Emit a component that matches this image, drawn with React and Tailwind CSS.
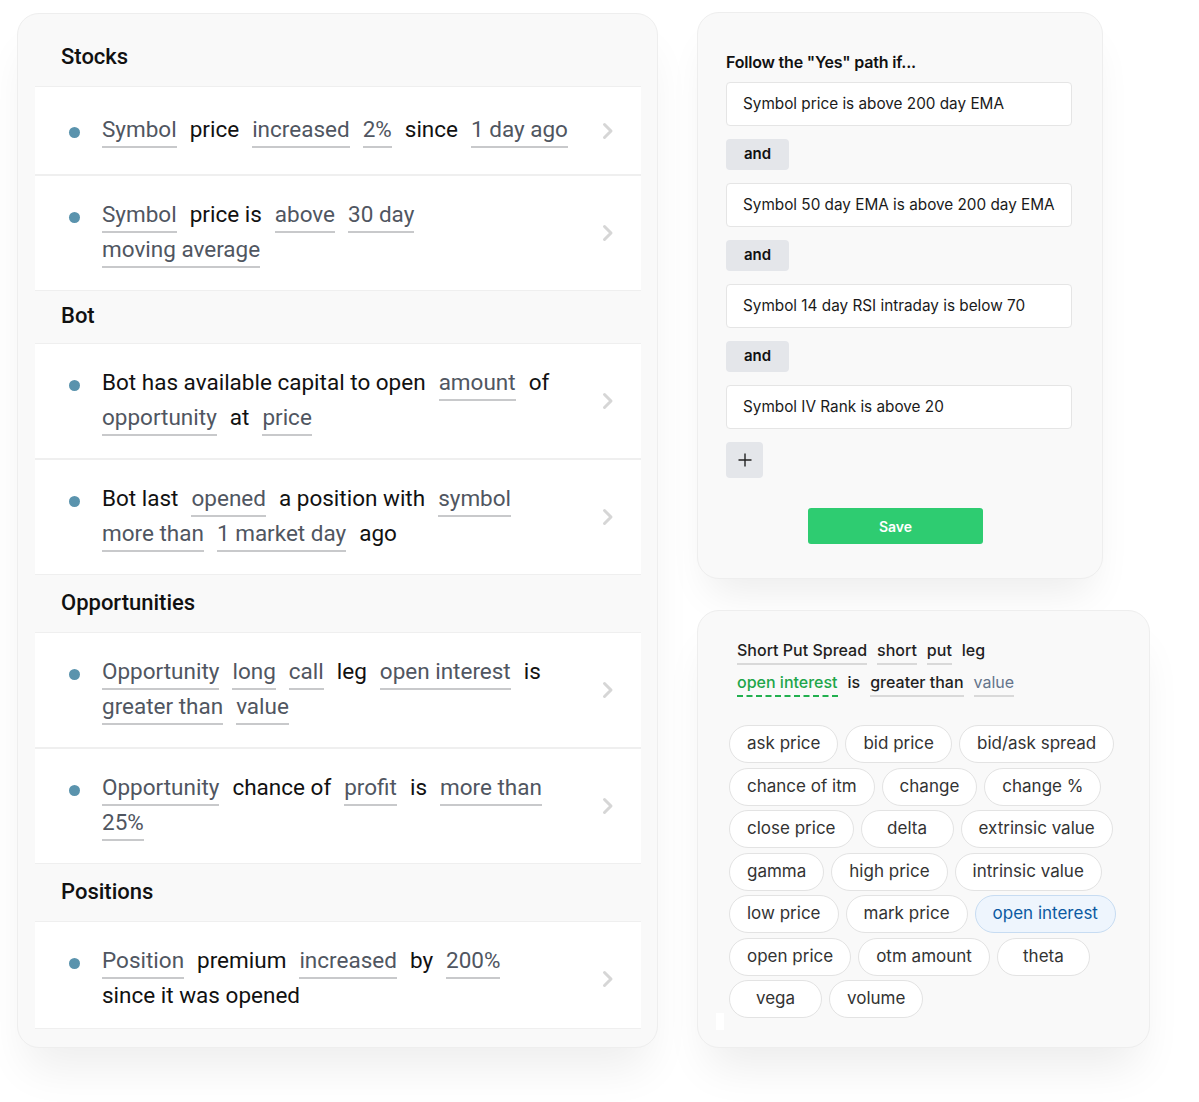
import React from 'react';

const sections = [
  {
    title: 'Stocks',
    head: 'h-[57px]',
    items: [
      [[['Symbol', 1], ['price'], ['increased', 1], ['2%', 1], ['since'], ['1 day ago', 1]]],
      [
        [['Symbol', 1], ['price is'], ['above', 1], ['30 day', 1]],
        [['moving average', 1]],
      ],
    ],
  },
  {
    title: 'Bot',
    head: 'h-[52px]',
    items: [
      [
        [['Bot has available capital to open'], ['amount', 1], ['of']],
        [['opportunity', 1], ['at'], ['price', 1]],
      ],
      [
        [['Bot last'], ['opened', 1], ['a position with'], ['symbol', 1]],
        [['more than', 1], ['1 market day', 1], ['ago']],
      ],
    ],
  },
  {
    title: 'Opportunities',
    head: 'h-[57px]',
    items: [
      [
        [['Opportunity', 1], ['long', 1], ['call', 1], ['leg'], ['open interest', 1], ['is']],
        [['greater than', 1], ['value', 1]],
      ],
      [
        [['Opportunity', 1], ['chance of'], ['profit', 1], ['is'], ['more than', 1]],
        [['25%', 1]],
      ],
    ],
  },
  {
    title: 'Positions',
    head: 'h-[57px]',
    items: [
      [
        [['Position', 1], ['premium'], ['increased', 1], ['by'], ['200%', 1]],
        [['since it was opened']],
      ],
    ],
  },
];

const conditions = [
  'Symbol price is above 200 day EMA',
  'Symbol 50 day EMA is above 200 day EMA',
  'Symbol 14 day RSI intraday is below 70',
  'Symbol IV Rank is above 20',
];

const chipRows = [
  ['ask price', 'bid price', 'bid/ask spread'],
  ['chance of itm', 'change', 'change %'],
  ['close price', 'delta', 'extrinsic value'],
  ['gamma', 'high price', 'intrinsic value'],
  ['low price', 'mark price', 'open interest'],
  ['open price', 'otm amount', 'theta'],
  ['vega', 'volume'],
];

const Chevron = () => (
  <svg width="14" height="18" viewBox="0 0 14 18" fill="none">
    <path d="M3.5 2.5 L10 9 L3.5 15.5" stroke="#d6d6d6" strokeWidth="3" strokeLinecap="round" strokeLinejoin="round" />
  </svg>
);

const Token = ({ text, link }) => (
  <span
    className={`inline-block leading-[33px] border-b-2 whitespace-nowrap ${
      link ? 'text-[#505661] border-[#c8c9cb]' : 'text-[#111] border-transparent'
    }`}
  >
    {text}
  </span>
);

const RuleRow = ({ lines, last }) => (
  <div
    className={`bg-white border-y border-[#efefef] min-h-[89px] flex items-center pl-[34px] pr-[26px] ${
      last ? 'pt-[22px] pb-[14px]' : 'py-[22px]'
    }`}
  >
    <div className="flex-1 flex items-start">
      <span className="w-[11px] h-[11px] rounded-full bg-[#5a93ad] mt-[14px] shrink-0" />
      <div className="ml-[22px] flex flex-col">
        {lines.map((line, i) => (
          <div key={i} className="flex gap-x-[13px]">
            {line.map(([t, l], j) => (
              <Token key={j} text={t} link={l} />
            ))}
          </div>
        ))}
      </div>
    </div>
    <Chevron />
  </div>
);

const Chip = ({ label }) => {
  const active = label === 'open interest';
  return (
    <span
      className={`h-[38px] min-w-[93px] px-[17px] rounded-full border flex items-center justify-center text-[17px] whitespace-nowrap ${
        active ? 'bg-[#eef5fd] border-[#c7dcf2] text-[#0b5aa2]' : 'bg-white border-[#e3e3e3] text-[#333]'
      }`}
    >
      {label}
    </span>
  );
};

export default function App() {
  return (
    <div className="min-h-[1102px] w-[1199px] bg-white flex items-start gap-[39px] pl-[17px] pt-[13px]">
      {/* left list */}
      <div className="w-[641px] h-[1035px] rounded-[22px] bg-[#f9f9f9] border border-[#eeeeee] shadow-[0_30px_45px_-10px_rgba(0,0,0,0.07)] pl-[17px] pr-[16px] pt-[15px] overflow-hidden font-['Roboto',sans-serif] text-[22.5px]">
        {sections.map((s, si) => (
          <div key={s.title}>
            <div className={`${s.head} flex items-center pl-[26px] pb-[3px] text-[22px] font-medium text-[#111]`}>
              {s.title}
            </div>
            {s.items.map((lines, i) => (
              <RuleRow key={i} lines={lines} last={si === sections.length - 1 && i === s.items.length - 1} />
            ))}
          </div>
        ))}
      </div>

      {/* right column */}
      <div className="flex flex-col gap-[31px] -mt-[1px] font-['Inter',sans-serif]">
        <div className="w-[406px] rounded-[22px] bg-[#f9f9f9] border border-[#eeeeee] shadow-[0_25px_40px_-12px_rgba(0,0,0,0.08)] pl-[28px] pt-[39px] pb-[34px] flex flex-col">
          <div className="text-[16px] leading-[20px] font-semibold text-[#111] tracking-[-0.2px]">Follow the "Yes" path if...</div>
          <div className="mt-[10px] flex flex-col gap-[13px]">
            {conditions.map((c, i) => (
              <React.Fragment key={c}>
                {i > 0 && (
                  <div className="w-[63px] h-[31px] rounded-[4px] bg-[#e4e6ea] flex items-center justify-center text-[15px] font-semibold text-[#111]">
                    and
                  </div>
                )}
                <div className="w-[346px] h-[44px] rounded-[4px] bg-white border border-[#e5e5e5] flex items-center px-[16px] text-[15.3px] text-[#1a1a1a]">
                  {c}
                </div>
              </React.Fragment>
            ))}
            <div className="w-[37px] h-[36px] rounded-[4px] bg-[#e4e6ea] flex items-center justify-center">
              <svg width="16" height="16" viewBox="0 0 16 16">
                <path d="M8 1.5 V14.5 M1.5 8 H14.5" stroke="#222" strokeWidth="1.4" />
              </svg>
            </div>
          </div>
          <button className="mt-[30px] ml-[82px] w-[175px] h-[36px] rounded-[3px] bg-[#2ecc71] text-white text-[14px] font-semibold">
            Save
          </button>
        </div>

        <div className="relative w-[453px] h-[438px] rounded-[22px] bg-[#f9f9f9] border border-[#eeeeee] shadow-[0_30px_45px_-12px_rgba(0,0,0,0.08)] pl-[31px] pt-[26px]">
          <div className="pl-[8px] text-[16px] font-medium text-[#1f1f1f]">
            <div className="flex gap-x-[10px]">
              <span className="leading-[26px] border-b-2 border-[#d9d9d9]">Short Put Spread</span>
              <span className="leading-[26px] border-b-2 border-[#d9d9d9]">short</span>
              <span className="leading-[26px] border-b-2 border-[#d9d9d9]">put</span>
              <span className="leading-[26px] border-b-2 border-transparent">leg</span>
            </div>
            <div className="flex gap-x-[10px] mt-[4px]">
              <span className="leading-[26px] border-b-2 border-dashed border-[#22b04f] text-[#1ea64a]">open interest</span>
              <span className="leading-[26px] border-b-2 border-transparent">is</span>
              <span className="leading-[26px] border-b-2 border-[#d9d9d9]">greater than</span>
              <span className="leading-[26px] border-b-2 border-[#d9d9d9] text-[#64748b] font-normal">value</span>
            </div>
          </div>
          <div className="mt-[28px] flex flex-col gap-[4.5px]">
            {chipRows.map((row, i) => (
              <div key={i} className="flex gap-[7px]">
                {row.map((c) => (
                  <Chip key={c} label={c} />
                ))}
              </div>
            ))}
          </div>
          <span className="absolute left-[18px] top-[402px] w-[8px] h-[17px] bg-white" />
        </div>
      </div>
    </div>
  );
}
